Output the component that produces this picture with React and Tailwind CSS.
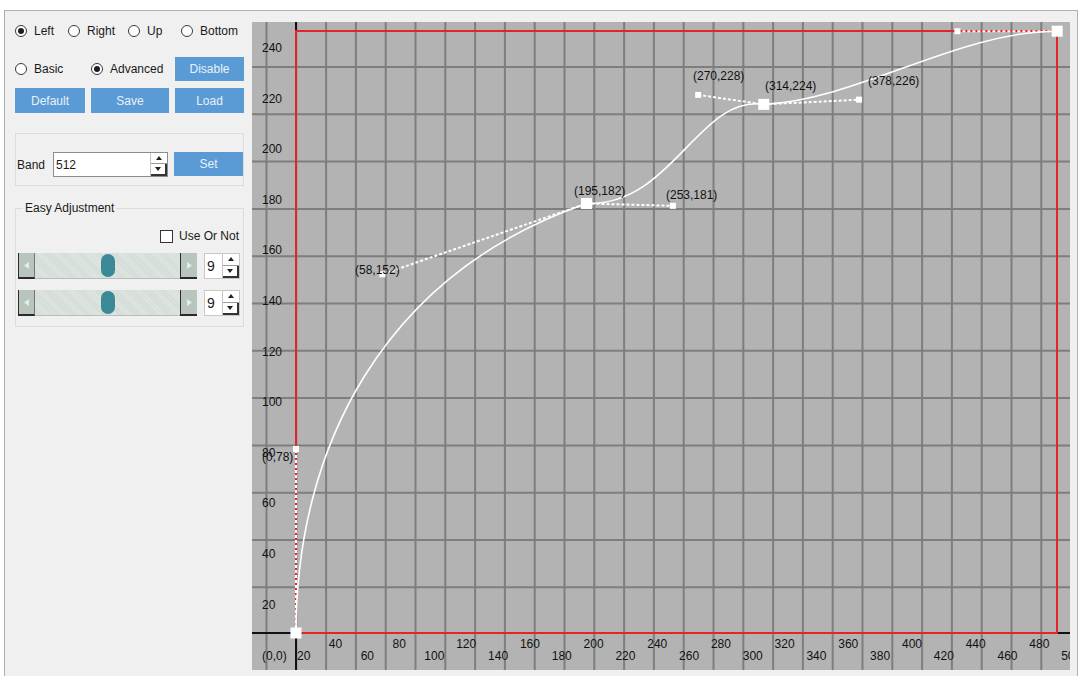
import React from "react";

const X = (v) => 296 + v * 1.4896;
const Y = (v) => 633 - v * 2.36;

function Radio({ checked, label }) {
  return (
    <span className="flex items-center gap-[7px]">
      <span className="w-[12px] h-[12px] rounded-full border border-[#3a3a3a] bg-white flex items-center justify-center">
        {checked && <span className="w-[6px] h-[6px] rounded-full bg-[#1e1e1e]" />}
      </span>
      <span className="text-[#1a1a1a]">{label}</span>
    </span>
  );
}

function Btn({ w, h, children }) {
  return (
    <div className={`${w} ${h} bg-[#5b9bd5] text-[#e8f1fa] flex items-center justify-center`}>{children}</div>
  );
}

function SpinArrows() {
  return (
    <div className="flex flex-col w-[17px] h-full border-l border-[#c4c4c4]">
      <div className="flex-1 flex items-center justify-center border-b border-[#9a9a9a]">
        <svg width="6" height="4" viewBox="0 0 6 4"><path d="M0 4 L3 0 L6 4 Z" fill="#222" /></svg>
      </div>
      <div className="flex-1 flex items-center justify-center border-b-2 border-r-2 border-[#333]">
        <svg width="6" height="4" viewBox="0 0 6 4"><path d="M0 0 L3 4 L6 0 Z" fill="#222" /></svg>
      </div>
    </div>
  );
}

function Slider() {
  return (
    <div className="flex w-[179px] h-[26px]">
      <div className="w-[17px] h-full bg-[#b7c5bc] border-l border-r border-b-2 border-[#2a2a2a] border-r-[#6f7a73] flex items-center justify-center">
        <svg width="5" height="7" viewBox="0 0 5 7"><path d="M5 0 L0 3.5 L5 7 Z" fill="#e3ebe6" /></svg>
      </div>
      <div className="flex-1 h-full flex items-center justify-center border-b border-[#b5c0ba] bg-[repeating-linear-gradient(45deg,#d2dbd5_0px,#d2dbd5_1px,#e0e6e2_1px,#e0e6e2_2px)]">
        <div className="w-[14px] h-[23px] rounded-[7px] bg-[#3b8997]" />
      </div>
      <div className="w-[17px] h-full bg-[#b7c5bc] border-l border-b-2 border-[#2a2a2a] flex items-center justify-center">
        <svg width="5" height="7" viewBox="0 0 5 7"><path d="M0 0 L5 3.5 L0 7 Z" fill="#e3ebe6" /></svg>
      </div>
    </div>
  );
}

function SmallSpin() {
  return (
    <div className="ml-[7px] w-[36px] h-[26px] bg-white border border-[#c8c8c8] flex">
      <div className="flex-1 flex items-center pl-[2px] text-[14px] text-[#1a1a1a]">9</div>
      <SpinArrows />
    </div>
  );
}

function Chart() {
  const vGrid = Array.from({ length: 27 }, (_, k) => 266.5 + 29.8 * k);
  const hGrid = Array.from({ length: 12 }, (_, k) => 67 + 47.3 * k);
  const yLabels = Array.from({ length: 12 }, (_, k) => (k + 1) * 20);
  const xLabels = Array.from({ length: 25 }, (_, k) => (k + 1) * 20);
  const P = [
    [0, 0],
    [195, 182],
    [314, 224],
    [511, 255],
  ];
  const H = [
    [0, 78],
    [58, 152],
    [253, 181],
    [270, 228],
    [378, 226],
    [444, 255],
  ];
  const handleLines = [
    [P[0], H[0]],
    [H[1], P[1]],
    [P[1], H[2]],
    [H[3], P[2]],
    [P[2], H[4]],
    [H[5], P[3]],
  ];
  const pt = (p) => `${X(p[0])} ${Y(p[1])}`;
  const d = `M ${pt(P[0])} C ${pt(H[0])} ${pt(H[1])} ${pt(P[1])} C ${pt(H[2])} ${pt(H[3])} ${pt(P[2])} C ${pt(H[4])} ${pt(H[5])} ${pt(P[3])}`;
  const ptLabels = [
    ["(58,152)", 355, 274],
    ["(195,182)", 574, 195],
    ["(253,181)", 666, 199],
    ["(270,228)", 693, 80],
    ["(314,224)", 765, 90],
    ["(378,226)", 868, 85],
    ["(0,78)", 262, 461],
  ];
  const font = "Liberation Sans, Arial, sans-serif";
  return (
    <svg width="818" height="648" viewBox="252 22 818 648" className="block">
      <rect x="252" y="22" width="818" height="648" fill="#b3b3b3" />
      {vGrid.map((x, i) => (
        <line key={"v" + i} x1={x} y1="22" x2={x} y2="670" stroke="#7e7e7e" strokeWidth="2" />
      ))}
      {hGrid.map((y, i) => (
        <line key={"h" + i} x1="252" y1={y} x2="1070" y2={y} stroke="#7e7e7e" strokeWidth="2" />
      ))}
      <rect x="296" y="31" width="761" height="602" fill="none" stroke="#e3242b" strokeWidth="2" />
      <line x1="252" y1="633" x2="295" y2="633" stroke="#111" strokeWidth="2" />
      <line x1="1058" y1="633" x2="1070" y2="633" stroke="#111" strokeWidth="2" />
      <line x1="296" y1="22" x2="296" y2="30" stroke="#111" strokeWidth="2" />
      <line x1="296" y1="634" x2="296" y2="670" stroke="#111" strokeWidth="2" />
      {yLabels.map((v) => (
        <text key={"yl" + v} x="262" y={654.6 - 2.53 * v + 4.5} fontSize="12" fontFamily={font} fill="#111">
          {v}
        </text>
      ))}
      {xLabels.map((v) => (
        <text key={"xl" + v} x={297 + (v - 20) * 1.592} y={v % 40 === 0 ? 648 : 660} fontSize="12" fontFamily={font} fill="#111">
          {v}
        </text>
      ))}
      <text x="262" y="660" fontSize="12" fontFamily={font} fill="#111">(0,0)</text>
      {handleLines.map(([a, b], i) => (
        <line key={"hl" + i} x1={X(a[0])} y1={Y(a[1])} x2={X(b[0])} y2={Y(b[1])} stroke="#fff" strokeWidth="2" strokeDasharray="3 2" />
      ))}
      <path d={d} fill="none" stroke="#fff" strokeWidth="1.6" />
      {H.map((h, i) => (
        <rect key={"hh" + i} x={X(h[0]) - 3} y={Y(h[1]) - 3} width="6" height="6" fill="#fff" />
      ))}
      {P.map((p, i) => (
        <rect key={"pp" + i} x={X(p[0]) - 5.5} y={Y(p[1]) - 5.5} width="11" height="11" fill="#fff" />
      ))}
      {ptLabels.map(([t, x, y]) => (
        <text key={t} x={x} y={y} fontSize="12" fontFamily={font} fill="#111">
          {t}
        </text>
      ))}
    </svg>
  );
}

export default function App() {
  return (
    <div className="w-[1081px] h-[686px] bg-white pt-[10px] pl-[4px] overflow-hidden font-['Liberation_Sans',Arial,sans-serif] text-[12px] leading-[14px]">
      <div className="w-[1074px] h-[666px] border-t border-l border-r border-[#b0b0b0] bg-[#f0f0f0] flex">
        <div className="w-[247px] shrink-0 pl-[10px] pt-[12px] flex flex-col">
          <div className="h-[16px] flex items-center">
            <div className="w-[53px]"><Radio checked label="Left" /></div>
            <div className="w-[60px]"><Radio label="Right" /></div>
            <div className="w-[53px]"><Radio label="Up" /></div>
            <div><Radio label="Bottom" /></div>
          </div>
          <div className="mt-[18px] h-[24px] flex items-center">
            <div className="w-[76px]"><Radio label="Basic" /></div>
            <div className="w-[84px]"><Radio checked label="Advanced" /></div>
            <Btn w="w-[69px]" h="h-[24px]">Disable</Btn>
          </div>
          <div className="mt-[7px] flex gap-[6px]">
            <Btn w="w-[70px]" h="h-[25px]">Default</Btn>
            <Btn w="w-[78px]" h="h-[25px]">Save</Btn>
            <Btn w="w-[69px]" h="h-[25px]">Load</Btn>
          </div>
          <div className="mt-[20px] w-[229px] h-[53px] border border-[#dcdcdc] pt-[18px] flex items-start">
            <div className="w-[37px] h-[25px] pl-[1px] flex items-center text-[#1a1a1a]">Band</div>
            <div className="w-[115px] h-[25px] bg-white border border-[#8c8c8c] flex">
              <div className="flex-1 flex items-center pl-[2px] text-[#1a1a1a]">512</div>
              <SpinArrows />
            </div>
            <div className="ml-[6px]">
              <Btn w="w-[69px]" h="h-[24px]">Set</Btn>
            </div>
          </div>
          <fieldset className="mt-[15px] w-[229px] h-[126px] border border-[#dcdcdc]">
            <legend className="ml-[7px] px-[2px] text-[#1a1a1a]">Easy Adjustment</legend>
            <div className="mt-[14px] h-[14px] flex items-center justify-end pr-[4px] gap-[6px]">
              <span className="w-[13px] h-[13px] border border-[#333] bg-white" />
              <span className="text-[#1a1a1a]">Use Or Not</span>
            </div>
            <div className="mt-[10px] pl-[2px] flex items-center">
              <Slider />
              <SmallSpin />
            </div>
            <div className="mt-[11px] pl-[2px] flex items-center">
              <Slider />
              <SmallSpin />
            </div>
          </fieldset>
        </div>
        <div className="mt-[11px]">
          <Chart />
        </div>
      </div>
    </div>
  );
}
